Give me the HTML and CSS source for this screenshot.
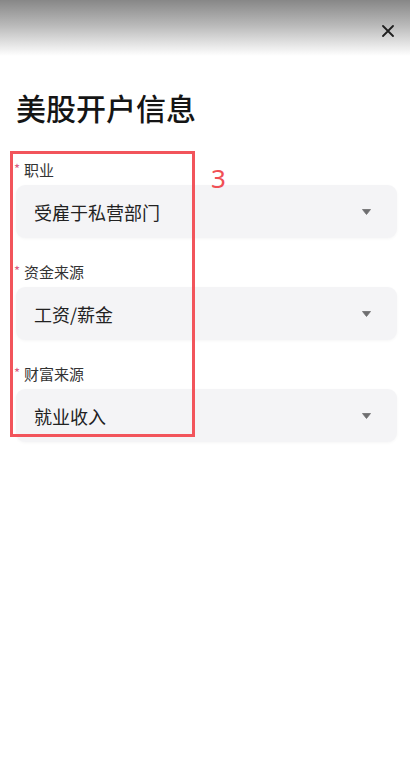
FILE: index.html
```html
<!DOCTYPE html>
<html lang="zh">
<head>
<meta charset="utf-8">
<title>美股开户信息</title>
<link rel="stylesheet" href="styles.css">
</head>
<body>
<div class="page">
  <div class="topbar">
    <span class="close" aria-label="关闭">
      <svg width="12" height="12" viewBox="0 0 12 12"><path d="M1 1L11 11M11 1L1 11" stroke="#1f1f1f" stroke-width="1.8" stroke-linecap="round"/></svg>
    </span>
  </div>
  <h1 class="title">美股开户信息</h1>
  <div class="form">
    <div class="field">
      <div class="label"><span class="req">*</span>职业</div>
      <div class="select">
        <span class="value">受雇于私营部门</span>
        <svg class="arrow" width="9" height="6" viewBox="0 0 9 6"><path d="M0.5 0.5H8.5L4.5 5.5Z" fill="#6e6e70" stroke="#6e6e70" stroke-width="0.8" stroke-linejoin="round"/></svg>
      </div>
    </div>
    <div class="field">
      <div class="label"><span class="req">*</span>资金来源</div>
      <div class="select">
        <span class="value">工资/薪金</span>
        <svg class="arrow" width="9" height="6" viewBox="0 0 9 6"><path d="M0.5 0.5H8.5L4.5 5.5Z" fill="#6e6e70" stroke="#6e6e70" stroke-width="0.8" stroke-linejoin="round"/></svg>
      </div>
    </div>
    <div class="field">
      <div class="label"><span class="req">*</span>财富来源</div>
      <div class="select">
        <span class="value">就业收入</span>
        <svg class="arrow" width="9" height="6" viewBox="0 0 9 6"><path d="M0.5 0.5H8.5L4.5 5.5Z" fill="#6e6e70" stroke="#6e6e70" stroke-width="0.8" stroke-linejoin="round"/></svg>
      </div>
    </div>
  </div>
  <div class="annot-box"></div>
  <div class="annot-num">3</div>
</div>
</body>
</html>
```
FILE: styles.css
```css
html, body {
  margin: 0;
  padding: 0;
  background: #ffffff;
}
body {
  font-family: "Noto Sans CJK SC", "Noto Sans", sans-serif;
  color: #1f1f1f;
}
.page {
  position: relative;
  width: 410px;
  min-height: 776px;
}
.topbar {
  height: 56px;
  background: linear-gradient(to bottom, #878787 0%, #b9b9b9 45%, #ffffff 100%);
  display: flex;
  justify-content: flex-end;
  align-items: flex-start;
  padding-right: 16px;
  box-sizing: border-box;
}
.close {
  display: flex;
  width: 12px;
  height: 12px;
  margin-top: 25px;
}
.title {
  margin: 31px 0 0 16px;
  font-size: 30px;
  line-height: 40px;
  font-weight: 500;
  color: #151515;
}
.form {
  margin-top: 33px;
  padding: 0 13px 0 16px;
  display: flex;
  flex-direction: column;
  gap: 24px;
}
.field {
  display: flex;
  flex-direction: column;
  gap: 5px;
}
.label {
  display: flex;
  align-items: center;
  height: 20px;
  font-size: 15px;
  line-height: 20px;
  color: #333333;
  margin-left: -2px;
}
.req {
  color: #d95c80;
  font-size: 13px;
  line-height: 12px;
  margin-right: 4px;
  position: relative;
  top: -1px;
}
.select {
  height: 53px;
  border-radius: 9px;
  background: #f4f4f6;
  box-shadow: 0 1px 3px rgba(0, 0, 0, 0.04);
  display: flex;
  align-items: center;
  justify-content: space-between;
  padding: 0 26px 0 18px;
}
.value {
  font-size: 18px;
  color: #222222;
}
.arrow {
  display: block;
}
.annot-box {
  position: absolute;
  left: 10px;
  top: 151px;
  width: 179px;
  height: 280px;
  border: 3px solid #f2545b;
}
.annot-num {
  position: absolute;
  left: 211px;
  top: 160px;
  font-family: "Noto Sans", sans-serif;
  font-size: 26px;
  line-height: 36px;
  font-weight: 400;
  color: #f04f55;
}
```
